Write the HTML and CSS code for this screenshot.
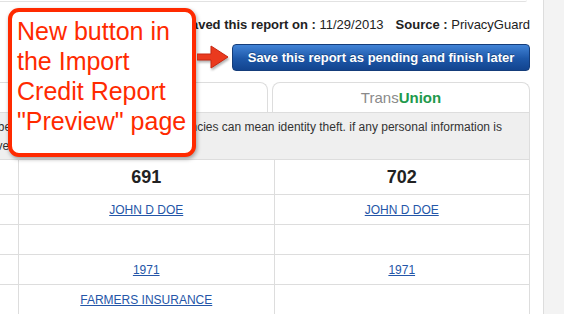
FILE: index.html
```html
<!DOCTYPE html>
<html lang="en">
<head>
  <meta charset="UTF-8">
  <title>Credit Report Preview</title>
  <link rel="stylesheet" href="styles.css">
</head>
<body>
  <div class="page">
    <div class="main">
      <div class="content">
        <div class="top-edge"></div>
        <div class="saved-line">
          <span><b>Saved this report on :</b> 11/29/2013</span>
          <span class="source"><b>Source :</b> PrivacyGuard</span>
        </div>
        <div class="btn-row">
          <button class="save-btn" type="button">Save this report as pending and finish later</button>
        </div>
        <div class="tabs">
          <div class="tab tab-left">Experian</div>
          <div class="tab tab-right"><span class="tu-trans">Trans</span><span class="tu-union">Union</span></div>
        </div>
        <div class="notice">
          <div class="notice-line">
            <span>Please review this report closely, since a difference in any number between the credit reporting agencies can mean identity theft. if any personal information is</span>
          </div>
          <div class="notice-line">
            <span>incorrect, then you need to verify it with the reporting bureau.</span>
          </div>
        </div>
        <table class="report">
          <tr class="score">
            <td class="label">Credit Score</td>
            <td>691</td>
            <td>702</td>
          </tr>
          <tr>
            <td class="label">Name</td>
            <td><a href="#">JOHN D DOE</a></td>
            <td><a href="#">JOHN D DOE</a></td>
          </tr>
          <tr>
            <td class="label">Also Known As</td>
            <td></td>
            <td></td>
          </tr>
          <tr>
            <td class="label">Year of Birth</td>
            <td><a href="#">1971</a></td>
            <td><a href="#">1971</a></td>
          </tr>
          <tr>
            <td class="label">Employer</td>
            <td><a href="#">FARMERS INSURANCE</a></td>
            <td></td>
          </tr>
        </table>
      </div>
    </div>
    <div class="side"></div>
  </div>

  <div class="callout">New button in<br>the Import<br>Credit Report<br>"Preview" page</div>
  <svg class="arrow" width="34" height="26" viewBox="0 0 34 26">
    <path d="M0 10 L14 10 L14 2 L31 13 L14 24 L14 16 L0 16 Z" fill="#ea3a1e" stroke="#c82610" stroke-width="1"/>
  </svg>
</body>
</html>
```

FILE: styles.css
```css
body {
  margin: 0;
  font-family: "Liberation Sans", Arial, sans-serif;
  color: #333;
  background: #fff;
  overflow: hidden;
}

.page {
  display: flex;
  height: 314px;
}

.main {
  width: 543px;
  overflow: hidden;
}

.content {
  margin-left: -160px;
  width: 690px;
}

.top-edge {
  height: 1px;
  border-bottom: 1px solid #e2e2e2;
  border-bottom-right-radius: 4px;
  margin-right: 3px;
}

.saved-line {
  display: flex;
  justify-content: flex-end;
  font-size: 13px;
  line-height: 16px;
  margin-top: 15px;
  color: #222;
  white-space: nowrap;
}

.saved-line .source {
  margin-left: 12px;
}

.btn-row {
  text-align: right;
  margin-top: 11px;
  line-height: 0;
}

.save-btn {
  font-family: "Liberation Sans", Arial, sans-serif;
  font-weight: bold;
  font-size: 13px;
  color: #fff;
  height: 27px;
  width: 298px;
  padding: 0;
  border: 1px solid #153d7a;
  border-radius: 4px;
  background: linear-gradient(#4183d6, #1d57a8 55%, #12448f);
  text-shadow: 0 -1px 0 rgba(0, 0, 0, 0.3);
}

.tabs {
  display: flex;
  gap: 4px;
  margin-top: 11px;
  height: 30px;
}

.tab {
  border: 1px solid #ddd;
  border-bottom: none;
  border-radius: 8px 8px 0 0;
  text-align: center;
  font-size: 15px;
  line-height: 30px;
  color: #777;
}

.tab-left {
  flex: 1;
}

.tab-right {
  width: 256px;
}

.tu-trans {
  color: #8a8a8a;
}

.tu-union {
  color: #1f9a4c;
  font-weight: bold;
}

.notice {
  box-sizing: border-box;
  height: 47px;
  background: #efefef;
  border: 1px solid #ddd;
  border-bottom: none;
  font-size: 12px;
  line-height: 19px;
  padding: 5px 27px 0 10px;
  color: #333;
  overflow: hidden;
}

.notice-line {
  display: flex;
  justify-content: flex-end;
  white-space: nowrap;
}

.notice-line + .notice-line {
  justify-content: flex-start;
}

.report {
  width: 100%;
  border-collapse: collapse;
  table-layout: fixed;
}

.report td {
  border: 1px solid #ddd;
  height: 29px;
  padding: 0;
  text-align: center;
  font-size: 12px;
  vertical-align: middle;
}

.report td.label {
  width: 169px;
  text-align: left;
  padding-left: 8px;
  color: #333;
}

.report tr.score td {
  height: 34px;
  font-size: 18px;
  font-weight: bold;
  color: #222;
}

.report tr.score td.label {
  font-size: 12px;
  font-weight: normal;
}

.report a {
  color: #2456a8;
}

.side {
  flex: 1;
  background: #f3f3f3;
  border-left: 1px solid #ddd;
}

.callout {
  position: absolute;
  left: 8px;
  top: 8px;
  width: 175px;
  height: 137px;
  padding: 4px 0 0 5px;
  border: 4px solid #ff2a00;
  border-radius: 11px;
  background: #fff;
  box-shadow: 1px 2px 4px rgba(0, 0, 0, 0.35);
  color: #ff2a00;
  font-size: 25px;
  line-height: 30px;
  white-space: nowrap;
}

.arrow {
  position: absolute;
  left: 197px;
  top: 44px;
  filter: drop-shadow(1px 2px 1px rgba(0, 0, 0, 0.3));
}
```
